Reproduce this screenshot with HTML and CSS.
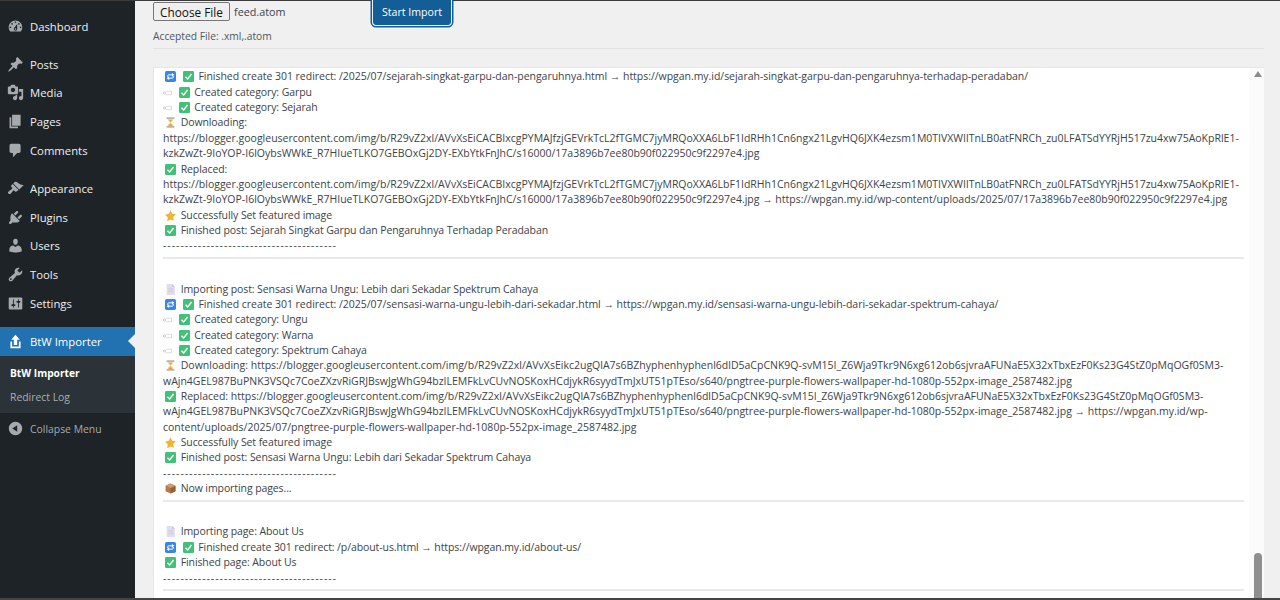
FILE: index.html
```html
<!DOCTYPE html>
<html lang="en">
<head>
<meta charset="utf-8">
<title>BtW Importer</title>
<link rel="stylesheet" href="styles.css">
</head>
<body>
<svg class="defs" aria-hidden="true">
  <symbol id="e-redirect" viewBox="0 0 20 20"><rect width="20" height="20" rx="3" fill="#3a86e8"/><path d="M5 11V8.500C5 7.500 5.800 7 6.500 7H13M15 9v2.500c0 1-.800 1.500-1.500 1.500H7" fill="none" stroke="#fff" stroke-width="1.800"/><path d="M12.500 3.500L17 7l-4.500 3.500zM7.500 9.500L3 13l4.500 3.500z" fill="#fff"/></symbol>
  <symbol id="e-check" viewBox="0 0 20 20"><rect width="20" height="20" rx="2.500" fill="#3fc277"/><path d="M4.500 10.500l4 4 7-9" fill="none" stroke="#fff" stroke-width="2.600"/></symbol>
  <symbol id="e-tag" viewBox="0 0 18 12"><circle cx="3" cy="7" r="2.200" fill="none" stroke="#999" stroke-width="1"/><path d="M6 3.500h11v7H6" fill="none" stroke="#bbb" stroke-width="1"/></symbol>
  <symbol id="e-hour" viewBox="0 0 20 20"><path d="M3 1h14v2H3zM3 17h14v2H3z" fill="#8a8f94"/><path d="M4.500 3h11c0 4-3.500 5-4.500 7 1 2 4.500 3 4.500 7h-11c0-4 3.500-5 4.500-7-1-2-4.500-3-4.500-7z" fill="#f0dca8"/><path d="M6.500 15.500l3.500-3.500 3.500 3.500v1.500h-7zM6.500 5h7l-3.500 4z" fill="#e5a33a"/></symbol>
  <symbol id="e-star" viewBox="0 0 20 20"><path d="M10 .500l3 6.300 6.800.900-5 4.800 1.300 6.900L10 17.200l-6.100 3.200 1.300-6.900-5-4.800L7 6.800z" fill="#f5b22c"/></symbol>
  <symbol id="e-doc" viewBox="0 0 20 20"><path d="M3 0h10l5 5v15H3z" fill="#e2dcee"/><path d="M13 0l5 5h-5z" fill="#c9c0dc"/><path d="M6 8h9M6 11h9M6 14h9" stroke="#c9c0dc" stroke-width="1"/></symbol>
  <symbol id="e-box" viewBox="0 0 20 20"><path d="M10 1l9 4v10l-9 4-9-4V5z" fill="#b7784a"/><path d="M10 9l9-4v10l-9 4z" fill="#94603a"/><path d="M1 5l9 4 9-4-9-4z" fill="#cf9a6c"/></symbol>
</svg>
<div class="frame-top"></div>
<div class="shell">
  <nav class="sidebar">
    <ul class="menu">
      <li class="item"><svg class="dash" viewBox="0 0 20 20"><path d="M3.760 16h12.480c1.100-1.370 1.760-3.110 1.760-5 0-4.420-3.580-8-8-8s-8 3.580-8 8c0 1.890.660 3.630 1.760 5zM10 4c.550 0 1 .450 1 1s-.450 1-1 1-1-.450-1-1 .450-1 1-1zM6 6c.550 0 1 .450 1 1s-.450 1-1 1-1-.450-1-1 .450-1 1-1zm8 0c.550 0 1 .450 1 1s-.450 1-1 1-1-.450-1-1 .450-1 1-1zm-5.370 5.550L12 7v6c0 1.100-.900 2-2 2s-2-.900-2-2c0-.570.240-1.080.630-1.450zM4 10c.550 0 1 .450 1 1s-.450 1-1 1-1-.450-1-1 .450-1 1-1zm12 0c.550 0 1 .450 1 1s-.450 1-1 1-1-.450-1-1 .450-1 1-1zm-5 3c0-.550-.450-1-1-1s-1 .450-1 1 .450 1 1 1 1-.450 1-1z"/></svg>Dashboard</li>
      <li class="sep"></li>
      <li class="item"><svg class="dash" viewBox="0 0 20 20"><path d="M10.440 3.020l1.820-1.820 6.360 6.350-1.830 1.820c-1.050-.680-2.480-.570-3.410.360l-.750.750c-.920.930-1.040 2.350-.350 3.410l-1.830 1.820-2.410-2.410-2.800 2.790c-.420.420-3.380 2.710-3.800 2.290s1.860-3.390 2.280-3.810l2.790-2.790L4.100 9.360l1.830-1.820c1.050.690 2.480.570 3.400-.360l.750-.750c.930-.920 1.050-2.350.360-3.410z"/></svg>Posts</li>
      <li class="item"><svg class="dash" viewBox="0 0 20 20"><path d="M13 11V4c0-.550-.450-1-1-1h-1.670L9 1H5L3.670 3H2c-.550 0-1 .450-1 1v7c0 .550.450 1 1 1h10c.550 0 1-.450 1-1zM7 4.500c1.380 0 2.500 1.120 2.500 2.500S8.380 9.500 7 9.500 4.500 8.380 4.500 7 5.620 4.500 7 4.500zM14 6h5v10.500c0 1.380-1.120 2.500-2.500 2.500S14 17.880 14 16.500s1.120-2.500 2.500-2.500c.170 0 .340.020.500.050V9h-3V6zm-4 8.050V13h2v3.500c0 1.380-1.120 2.500-2.500 2.500S7 17.880 7 16.500 8.120 14 9.500 14c.170 0 .340.020.500.050z"/></svg>Media</li>
      <li class="item"><svg class="dash" viewBox="0 0 20 20"><path d="M6 15V2h10v13H6zm-1 1h8v2H3V5h2v11z"/></svg>Pages</li>
      <li class="item"><svg class="dash" viewBox="0 0 20 20"><path d="M5 2h9c1.100 0 2 .900 2 2v7c0 1.100-.900 2-2 2h-2l-5 5v-5H5c-1.100 0-2-.900-2-2V4c0-1.100.900-2 2-2z"/></svg>Comments</li>
      <li class="sep"></li>
      <li class="item"><svg class="dash" viewBox="0 0 20 20"><path d="M14.480 11.060L7.410 3.990l1.500-1.500c.500-.560 2.300-.470 3.510.320 1.210.800 1.430 1.280 2.910 2.100 1.180.640 2.450 1.260 4.450.850zm-.710.710L6.700 4.700 4.930 6.470c-.390.390-.390 1.020 0 1.410l1.060 1.060c.390.390.390 1.030 0 1.420-.600.600-1.430 1.110-2.210 1.690-.350.260-.700.530-1.010.840C1.430 13.230.400 14.850 1.530 15.980c1.120 1.130 2.750.100 3.090-.240.310-.310.580-.660.840-1.010.580-.780 1.090-1.610 1.690-2.210.390-.390 1.020-.390 1.410 0l1.060 1.060c.390.390 1.020.390 1.410 0z"/></svg>Appearance</li>
      <li class="item"><svg class="dash" viewBox="0 0 20 20"><path d="M13.110 4.360L9.870 7.600 8 5.730l3.240-3.240c.350-.340 1.050-.200 1.560.320.520.510.660 1.210.310 1.550zm-8 1.770l.910-1.120 9.010 9.010-1.190.840c-.710.710-2.630 1.160-3.820 1.160H6.140L4.900 17.260c-.590.590-1.540.590-2.120 0-.590-.580-.590-1.530 0-2.120l1.240-1.240v-3.880c0-1.130.400-3.190 1.090-3.890zm7.260 3.970l3.240-3.240c.340-.350 1.040-.210 1.550.310.520.510.660 1.210.310 1.550l-3.240 3.250z"/></svg>Plugins</li>
      <li class="item"><svg class="dash" viewBox="0 0 20 20"><path d="M10 9.250c-2.270 0-2.730-3.440-2.730-3.440C7 4.020 7.820 2 9.970 2c2.160 0 2.980 2.020 2.710 3.810 0 0-.410 3.440-2.680 3.440zm0 2.570L12.720 10c2.390 0 4.520 2.330 4.520 4.530v2.490s-3.650 1.130-7.240 1.130c-3.650 0-7.240-1.130-7.240-1.130v-2.490c0-2.250 1.940-4.480 4.470-4.480z"/></svg>Users</li>
      <li class="item"><svg class="dash" viewBox="0 0 20 20"><path d="M16.680 9.770c-1.340 1.340-3.300 1.670-4.950.990l-5.410 6.520c-.990.990-2.590.990-3.580 0s-.990-2.590 0-3.570l6.520-5.420c-.680-1.650-.350-3.610.990-4.950 1.280-1.280 3.120-1.620 4.720-1.060l-2.890 2.890 2.820 2.820 2.860-2.870c.530 1.580.180 3.390-1.080 4.650zM3.810 16.210c.400.390 1.040.390 1.430 0 .400-.400.400-1.040 0-1.430-.390-.400-1.030-.400-1.430 0-.390.390-.390 1.030 0 1.430z"/></svg>Tools</li>
      <li class="item"><svg class="dash" viewBox="0 0 20 20"><path d="M18 16V4c0-.550-.450-1-1-1H3c-.550 0-1 .450-1 1v12c0 .550.450 1 1 1h14c.550 0 1-.450 1-1zM8 11h1c.550 0 1 .450 1 1s-.450 1-1 1H8v1.500c0 .280-.220.500-.500.500s-.500-.220-.500-.500V13H6c-.550 0-1-.450-1-1s.450-1 1-1h1V5.500c0-.280.220-.500.500-.500s.500.220.500.500V11zm5-2h-1c-.550 0-1-.450-1-1s.450-1 1-1h1V5.500c0-.280.220-.500.500-.500s.500.220.500.500V7h1c.550 0 1 .450 1 1s-.450 1-1 1h-1v5.500c0 .280-.220.500-.500.500s-.500-.220-.500-.500V9z"/></svg>Settings</li>
      <li class="sep"></li>
      <li class="item current"><svg class="dash" viewBox="0 0 20 20"><path d="M8 14V8H5l5-6 5 6h-3v6H8zm-2 2v-6H4v8h12v-8h-2v6H6z"/></svg>BtW Importer</li>
      <li class="submenu">
        <div class="sub-link active">BtW Importer</div>
        <div class="sub-link">Redirect Log</div>
      </li>
      <li class="collapse"><svg class="dash" viewBox="0 0 20 20"><path d="M10 2.160c4.330 0 7.840 3.510 7.840 7.840s-3.510 7.840-7.840 7.840S2.160 14.330 2.160 10 5.710 2.160 10 2.160zm2 11.720V6.120L6.180 9.970z"/></svg>Collapse Menu</li>
    </ul>
  </nav>
  <main class="content">
    <div class="upload-row">
      <div class="file-group">
        <button class="file-btn" type="button">Choose File</button>
        <span class="file-name">feed.atom</span>
      </div>
      <button class="import-btn" type="button">Start Import</button>
    </div>
    <p class="accepted">Accepted File: .xml,.atom</p>
    <div class="rule"></div>
    <section class="log">
      <div class="log-inner">
        <div class="ln prose"><svg class="em"><use href="#e-doc"/></svg> Importing post: Sejarah Singkat Garpu dan Pengaruhnya Terhadap Peradaban</div>
        <div class="ln tight"><svg class="em"><use href="#e-redirect"/></svg> <svg class="em"><use href="#e-check"/></svg> Finished create 301 redirect: /2025/07/sejarah-singkat-garpu-dan-pengaruhnya.html → https://wpgan.my.id/sejarah-singkat-garpu-dan-pengaruhnya-terhadap-peradaban/</div>
        <div class="ln prose"><svg class="em tag"><use href="#e-tag"/></svg> <svg class="em"><use href="#e-check"/></svg> Created category: Garpu</div>
        <div class="ln prose"><svg class="em tag"><use href="#e-tag"/></svg> <svg class="em"><use href="#e-check"/></svg> Created category: Sejarah</div>
        <div class="ln prose"><svg class="em"><use href="#e-hour"/></svg> Downloading:</div>
        <div class="ln">https://blogger.googleusercontent.com/img/b/R29vZ2xl/AVvXsEiCACBIxcgPYMAJfzjGEVrkTcL2fTGMC7jyMRQoXXA6LbF1IdRHh1Cn6ngx21LgvHQ6JXK4ezsm1M0TIVXWIlTnLB0atFNRCh_zu0LFATSdYYRjH517zu4xw75AoKpRlE1-</div>
        <div class="ln">kzkZwZt-9IoYOP-I6lOybsWWkE_R7HIueTLKO7GEBOxGj2DY-EXbYtkFnJhC/s16000/17a3896b7ee80b90f022950c9f2297e4.jpg</div>
        <div class="ln prose"><svg class="em"><use href="#e-check"/></svg> Replaced:</div>
        <div class="ln">https://blogger.googleusercontent.com/img/b/R29vZ2xl/AVvXsEiCACBIxcgPYMAJfzjGEVrkTcL2fTGMC7jyMRQoXXA6LbF1IdRHh1Cn6ngx21LgvHQ6JXK4ezsm1M0TIVXWIlTnLB0atFNRCh_zu0LFATSdYYRjH517zu4xw75AoKpRlE1-</div>
        <div class="ln">kzkZwZt-9IoYOP-I6lOybsWWkE_R7HIueTLKO7GEBOxGj2DY-EXbYtkFnJhC/s16000/17a3896b7ee80b90f022950c9f2297e4.jpg → https://wpgan.my.id/wp-content/uploads/2025/07/17a3896b7ee80b90f022950c9f2297e4.jpg</div>
        <div class="ln prose"><svg class="em"><use href="#e-star"/></svg> Successfully Set featured image</div>
        <div class="ln prose"><svg class="em"><use href="#e-check"/></svg> Finished post: Sejarah Singkat Garpu dan Pengaruhnya Terhadap Peradaban</div>
        <div class="ln dashes">----------------------------------------</div>
        <div class="log-rule"></div>
        <div class="ln gap"></div>
        <div class="ln prose"><svg class="em"><use href="#e-doc"/></svg> Importing post: Sensasi Warna Ungu: Lebih dari Sekadar Spektrum Cahaya</div>
        <div class="ln tight"><svg class="em"><use href="#e-redirect"/></svg> <svg class="em"><use href="#e-check"/></svg> Finished create 301 redirect: /2025/07/sensasi-warna-ungu-lebih-dari-sekadar.html → https://wpgan.my.id/sensasi-warna-ungu-lebih-dari-sekadar-spektrum-cahaya/</div>
        <div class="ln prose"><svg class="em tag"><use href="#e-tag"/></svg> <svg class="em"><use href="#e-check"/></svg> Created category: Ungu</div>
        <div class="ln prose"><svg class="em tag"><use href="#e-tag"/></svg> <svg class="em"><use href="#e-check"/></svg> Created category: Warna</div>
        <div class="ln prose"><svg class="em tag"><use href="#e-tag"/></svg> <svg class="em"><use href="#e-check"/></svg> Created category: Spektrum Cahaya</div>
        <div class="ln"><svg class="em"><use href="#e-hour"/></svg> Downloading: https://blogger.googleusercontent.com/img/b/R29vZ2xl/AVvXsEikc2ugQlA7s6BZhyphenhyphenl6dlD5aCpCNK9Q-svM15I_Z6Wja9Tkr9N6xg612ob6sjvraAFUNaE5X32xTbxEzF0Ks23G4StZ0pMqOGf0SM3-</div>
        <div class="ln">wAjn4GEL987BuPNK3VSQc7CoeZXzvRiGRJBswJgWhG94bzILEMFkLvCUvNOSKoxHCdjykR6syydTmJxUT51pTEso/s640/pngtree-purple-flowers-wallpaper-hd-1080p-552px-image_2587482.jpg</div>
        <div class="ln"><svg class="em"><use href="#e-check"/></svg> Replaced: https://blogger.googleusercontent.com/img/b/R29vZ2xl/AVvXsEikc2ugQlA7s6BZhyphenhyphenl6dlD5aCpCNK9Q-svM15I_Z6Wja9Tkr9N6xg612ob6sjvraAFUNaE5X32xTbxEzF0Ks23G4StZ0pMqOGf0SM3-</div>
        <div class="ln">wAjn4GEL987BuPNK3VSQc7CoeZXzvRiGRJBswJgWhG94bzILEMFkLvCUvNOSKoxHCdjykR6syydTmJxUT51pTEso/s640/pngtree-purple-flowers-wallpaper-hd-1080p-552px-image_2587482.jpg → https://wpgan.my.id/wp-</div>
        <div class="ln">content/uploads/2025/07/pngtree-purple-flowers-wallpaper-hd-1080p-552px-image_2587482.jpg</div>
        <div class="ln prose"><svg class="em"><use href="#e-star"/></svg> Successfully Set featured image</div>
        <div class="ln prose"><svg class="em"><use href="#e-check"/></svg> Finished post: Sensasi Warna Ungu: Lebih dari Sekadar Spektrum Cahaya</div>
        <div class="ln dashes">----------------------------------------</div>
        <div class="ln prose"><svg class="em"><use href="#e-box"/></svg> Now importing pages...</div>
        <div class="log-rule"></div>
        <div class="ln gap"></div>
        <div class="ln prose"><svg class="em"><use href="#e-doc"/></svg> Importing page: About Us</div>
        <div class="ln prose"><svg class="em"><use href="#e-redirect"/></svg> <svg class="em"><use href="#e-check"/></svg> Finished create 301 redirect: /p/about-us.html → https://wpgan.my.id/about-us/</div>
        <div class="ln prose"><svg class="em"><use href="#e-check"/></svg> Finished page: About Us</div>
        <div class="ln dashes">----------------------------------------</div>
        <div class="log-rule"></div>
      </div>
      <div class="scrollbar">
        <span class="arrow"></span>
        <span class="thumb"></span>
      </div>
    </section>
  </main>
</div>
<div class="frame-bottom"></div>
</body>
</html>
```

FILE: styles.css
```css
* { box-sizing: border-box; }
html, body { margin: 0; height: 600px; overflow: hidden; }
body {
  display: flex;
  flex-direction: column;
  background: #f0f0f1;
  color: #3c434a;
  font-family: "Open Sans", "Liberation Sans", sans-serif;
  font-size: 10.5px;
}
.defs { width: 0; height: 0; position: absolute; }
.frame-top { height: 1px; background: #3a3a3a; flex: none; }
.frame-bottom { height: 2px; background: #444; flex: none; }
.shell { flex: 1; display: flex; min-height: 0; }

.sidebar { width: 135px; flex: none; background: #1d2327; padding-top: 11px; }
.menu { list-style: none; margin: 0; padding: 0; }
.item {
  display: flex;
  align-items: center;
  gap: 6px;
  height: 28.8px;
  padding-left: 7px;
  color: #f0f0f1;
  font-size: 11.3px;
  position: relative;
}
.dash { width: 17px; height: 17px; fill: #a7aaad; flex: none; }
.sep { height: 9px; }
.current { background: #2271b1; color: #fff; }
.current .dash { fill: #fff; }
.current::after {
  content: "";
  position: absolute;
  right: 0;
  top: 50%;
  margin-top: -7px;
  border: 7px solid transparent;
  border-right-color: #f0f0f1;
  border-left-width: 0;
}
.submenu { background: #2c3338; padding: 5px 0 3px; }
.sub-link { height: 24.5px; line-height: 24.5px; padding-left: 10px; font-size: 10.4px; color: #a7aeb4; }
.sub-link.active { color: #fff; font-weight: 700; font-size: 10.2px; }
.collapse {
  display: flex;
  align-items: center;
  gap: 6px;
  height: 32px;
  padding-left: 7px;
  color: #a7aaad;
  font-size: 10.4px;
}

.content { flex: 1; min-width: 0; padding: 0 16px 0 18px; display: flex; flex-direction: column; }
.upload-row { display: flex; align-items: flex-start; height: 26px; margin-top: -3px; }
.file-group { width: 219px; display: flex; align-items: center; gap: 4px; padding-top: 4px; }
.file-btn {
  width: 77px;
  height: 19px;
  padding: 0;
  background: #efefef;
  border: 1px solid #767676;
  border-radius: 2px;
  color: #111;
  font: 11.8px "Open Sans", sans-serif;
}
.file-name { font-size: 10.8px; color: #3c434a; }
.import-btn {
  width: 78px;
  height: 27px;
  margin: 0 0 0 1px;
  padding: 0;
  background: #135e96;
  border: 1px solid #135e96;
  border-radius: 3px;
  box-shadow: 0 0 0 1px #f0f0f1, 0 0 0 2.5px #135e96;
  color: #fff;
  font: 10.6px "Open Sans", sans-serif;
}
.accepted { margin: 5px 0 0; height: 15px; line-height: 15px; font-size: 10.25px; color: #50575e; }
.rule { height: 1px; background: #e2e2e3; margin-top: 4px; }
.log {
  position: relative;
  margin-top: 18px;
  flex: 1;
  min-height: 0;
  overflow: hidden;
  background: #fff;
  border-top: 1px solid #e6e6e6;
  border-left: 1px solid #e6e6e6;
}
.log-inner { margin-top: -14px; padding: 0 20px 0 9px; }
.ln { height: 15.36px; line-height: 15.36px; white-space: nowrap; }
.prose { letter-spacing: -0.09px; }
.tight { letter-spacing: -0.03px; }
.dashes { letter-spacing: 0.97px; }
.gap { margin-top: 7px; }
.log-rule { height: 2px; background: #e9e9e9; margin-top: 3.5px; }
.em { width: 11px; height: 11px; margin: 0 2px; vertical-align: -2px; }
.em.tag { width: 9px; margin: 0 2px 0 0; }
.scrollbar { position: absolute; right: 0; top: 0; bottom: 0; width: 15px; background: #fbfbfb; }
.arrow {
  position: absolute;
  left: 5px;
  top: 3px;
  border: 4px solid transparent;
  border-bottom: 6px solid #8a8a8a;
  border-top-width: 0;
}
.thumb { position: absolute; left: 5px; right: 2px; bottom: 0; height: 45px; background: #8f8f8f; border-radius: 4px 4px 0 0; }
```
